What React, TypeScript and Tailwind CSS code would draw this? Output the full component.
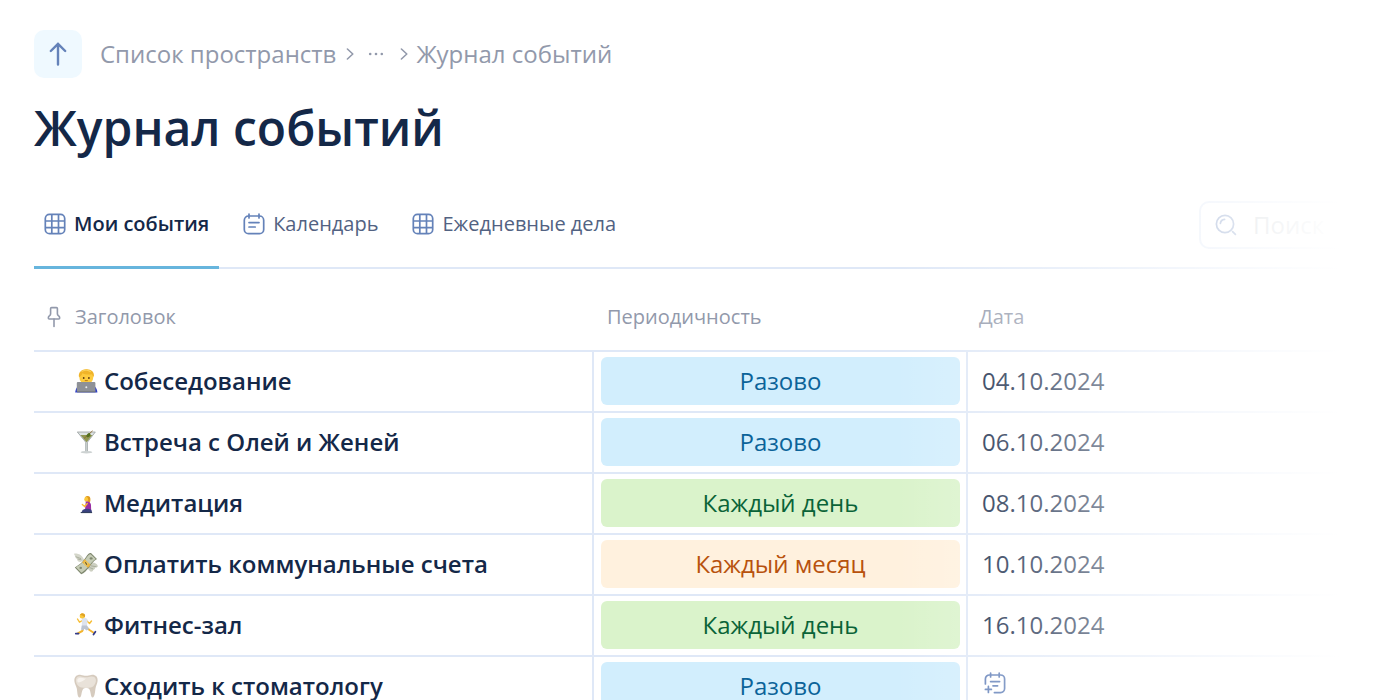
import { useState } from "react";
import type { ReactNode } from "react";

type Period = "once" | "daily" | "monthly";
type EventRow = { emoji: ReactNode; title: string; period: Period; date: string | null };

const PERIODS: Record<Period, { label: string; className: string }> = {
  once: { label: "Разово", className: "bg-[#d2eefd] text-[#0b6399]" },
  daily: { label: "Каждый день", className: "bg-[#daf3cb] text-[#0a6338]" },
  monthly: { label: "Каждый месяц", className: "bg-[#fff1de] text-[#b8520d]" },
};

function GridIcon() {
  return (
    <svg viewBox="0 0 22 22" className="size-[22px] shrink-0" fill="none" stroke="#6482b9" strokeWidth="1.7" aria-hidden="true">
      <rect x="1.3" y="1.3" width="19.4" height="19.4" rx="4.2" />
      <path d="M7.8 1.3v19.4M14.5 1.3v19.4M1.3 8h19.4M1.3 14.6h19.4" />
    </svg>
  );
}

function CalendarIcon() {
  return (
    <svg viewBox="0 0 22 22" className="size-[22px] shrink-0" fill="none" stroke="#6482b9" strokeWidth="1.7" strokeLinecap="round" aria-hidden="true">
      <rect x="1.3" y="3" width="19.4" height="17.7" rx="4.2" />
      <path d="M6 1v4M16 1v4M6 9.6h10M6 14h6.2" />
    </svg>
  );
}

function CalendarAddIcon() {
  return (
    <svg viewBox="0 0 22 22" className="size-[22px]" fill="none" stroke="#5d7cb6" strokeWidth="1.7" strokeLinecap="round" aria-hidden="true">
      <path d="M1.4 12V7a4 4 0 0 1 4-4h11.2a4 4 0 0 1 4 4v9.6a4 4 0 0 1-4 4H10.4" />
      <path d="M6.6 1v4M15.2 1v4M6.6 9.6h9M9 13.8h4.6M4.4 14.4v6M1.4 17.4h6" />
    </svg>
  );
}

function PinIcon() {
  return (
    <svg viewBox="0 0 22 22" className="size-[22px]" fill="none" stroke="#9299ab" strokeWidth="1.6" strokeLinecap="round" strokeLinejoin="round" aria-hidden="true">
      <path d="M8.6 1.6h4.8c.6 0 1 .5 1 1v5.1c0 .9.3 1.4 1 2 .9.7 1.3 1.4 1.3 2.3 0 .7-.4 1-1 1H6.3c-.6 0-1-.3-1-1 0-.9.4-1.6 1.3-2.3.7-.6 1-1.1 1-2V2.6c0-.5.4-1 1-1z" />
      <path d="M11 13v7.4" />
    </svg>
  );
}

function SearchIcon() {
  return (
    <svg viewBox="0 0 22 22" className="size-[22px] shrink-0" fill="none" stroke="#6482b9" strokeWidth="1.7" strokeLinecap="round" aria-hidden="true">
      <circle cx="10" cy="10" r="8.6" />
      <path d="M5.4 9.4a4.6 4.6 0 0 1 4.2-4M17.6 17.6l2.8 2.8" />
    </svg>
  );
}

function Chevron() {
  return (
    <svg viewBox="0 0 8 14" className="h-3.5 w-2 shrink-0" fill="none" stroke="#9299ab" strokeWidth="1.6" strokeLinecap="round" strokeLinejoin="round" aria-hidden="true">
      <path d="M1.4 2 6.8 7 1.4 12" />
    </svg>
  );
}

function Emoji({ children }: { children: ReactNode }) {
  return (
    <svg viewBox="0 0 24 24" className="size-6 shrink-0" aria-hidden="true">
      {children}
    </svg>
  );
}

const technologist = (
  <Emoji>
    <path d="M1.2 23.6c.3-3.6 2-6.9 5-7.6h12c3 .7 5 4 5.200 7.600z" fill="#3040c8" />
    <ellipse cx="12.3" cy="8" rx="7" ry="7.6" fill="#fdcb3e" />
    <path d="M5 8.200C4 3.300 7.500.2 12.500.2c5 0 8.300 3 7.300 7.800-.9-.8-1.400-1.800-1.900-2.800-4 .7-7.400.2-9.500-1-.6 1.800-1.700 3.200-3.400 4z" fill="#f0b429" />
    <path d="M7.5 2.600c3-1.700 7-1.600 9.300.2" fill="none" stroke="#fbd05a" strokeWidth="1.1" />
    <circle cx="9.700" cy="9" r=".9" fill="#5b3a12" />
    <circle cx="14.900" cy="9" r=".9" fill="#5b3a12" />
    <path d="M10.800 11.600h3" stroke="#a7640d" strokeWidth=".8" />
    <rect x="2.800" y="13" width="18.600" height="10" rx="1" fill="#8e9197" />
    <path d="M3 22.200h18.600v1.200H3z" fill="#75787e" />
    <circle cx="12.300" cy="18.200" r="1" fill="#e9ebee" />
  </Emoji>
);

const cocktail = (
  <Emoji>
    <path d="M3.2 2h18.200l-7.800 10.200v9.300h-2.300v-9.300z" fill="#dfe4e4" />
    <path d="M6.300 5h12.200l-5.900 7.200z" fill="#8f9650" />
    <path d="M3.2 2h18.200M3.500 2.200l8.300 10v9.500M21.200 2.200l-7.800 10v9.500" fill="none" stroke="#8c9494" strokeWidth=".7" />
    <path d="m10 8.500 8.600-7.700" stroke="#8f6a30" strokeWidth=".9" />
    <ellipse cx="14.500" cy="5.200" rx="2.300" ry="1.700" fill="#56701f" transform="rotate(-40 14.500 5.200)" />
    <ellipse cx="12.500" cy="22.200" rx="5.800" ry="1.300" fill="#cdd2d2" />
  </Emoji>
);

const kneeling = (
  <Emoji>
    <path d="M11 9c-.5-2.500.5-4 2.500-4 2.200 0 3.200 1.500 2.900 4.300-.2 1.500-.6 3-1.400 3.900l-2-3z" fill="#e09a1d" />
    <ellipse cx="12.200" cy="8.300" rx="1.900" ry="2.500" fill="#fbc83b" />
    <path d="M11.800 10.500c3.100-.5 4.900 1 5.200 3.500l.2 6h-6.300z" fill="#9a2fa4" />
    <path d="m13.300 12.500-2.600 3-2.400-2" fill="none" stroke="#f7bd34" strokeWidth="1.3" strokeLinecap="round" />
    <path d="M8.500 19c3-1.500 6-1.500 8.700-.2.900 1.200.8 2.300.2 3.200H7.500z" fill="#39417f" />
    <path d="M6.700 20.900h11.400v1.200H6.700z" fill="#33405f" />
  </Emoji>
);

const money = (
  <Emoji>
    <path d="M10.500 8.500C8 2.800 4 1.100 0 1.700c.3 1.200.7 1.900 1.700 2.700-.5 1 .2 2 1.400 2.500-.2 1.400 1 2.800 3.300 3.100z" fill="#d4d6ca" />
    <path d="M15.500 11.500c3.500-2 7-.5 8.500 2.700-.8 1-1.700 1.400-2.900 1.200.2 1.300-.6 2.200-2 2.300.2 1.300-1 2.100-2.700 1.900L13 16z" fill="#cdd0c2" />
    <path d="m1.400 4.600 5.600 2M3.600 6.900l3.900 1M22.500 14.800l-5.600-1M19.300 17l-3.800-1.500" stroke="#a0a493" strokeWidth=".8" />
    <path d="M.8 15.500C5 12.500 8.200 11 12 5c2-3.200 3.500-4.500 5-3.900l6 5.900c-4 2-5.200 5-8.200 8.700-2.300 2.900-4.700 5.600-7.600 6.500z" fill="#7f886f" />
    <path d="M1.900 15.200c3.800-2.500 7.100-4.500 10.900-10 1.700-2.400 2.600-3.200 3.800-3l5.100 4.800c-3.500 2-5 5-8 8.300-2.200 2.500-4.200 4.500-6.300 5.400z" fill="#c6ccb6" />
    <path d="m8.200 10.500 5.800 5.300 2.600-3.100-5.900-5.400z" fill="#edb53b" />
    <circle cx="12.100" cy="11.600" r="2.200" fill="#e9c865" />
    <path d="m11.300 10.300 1.600 2.500" stroke="#6e5724" strokeWidth="1.200" />
    <ellipse cx="17.100" cy="6.400" rx="1.500" ry="1.200" fill="#7f886f" />
    <ellipse cx="6.700" cy="15.900" rx="1.300" ry="1.100" fill="#7f886f" />
  </Emoji>
);

const runner = (
  <Emoji>
    <g fill="none" strokeLinecap="round" strokeLinejoin="round">
      <path d="m11.500 13.500 4 3.500 4.500 3" stroke="#f4b52d" strokeWidth="2" />
      <path d="m9.800 14-1.500 4-4.500 2.300" stroke="#f4b52d" strokeWidth="2" />
      <path d="m12.500 7.500 3 3L17.500 8" stroke="#f7bd34" strokeWidth="1.400" />
      <path d="m8.500 7.500-3 1.700L3.500 6" stroke="#f7bd34" strokeWidth="1.400" />
      <path d="M1.800 20.600h2.700M19.500 21.500l1.900-2.700" stroke="#343c8a" strokeWidth="1.800" />
    </g>
    <path d="M7.800 5.200c2.200-.8 4.800-.3 5.800 1.500l-.7 7.300H7.800z" fill="#dde3ee" />
    <path d="M7.800 12.500H13l2.100 3.500-2.500 1.500-2.300-1.800-1 1.700-2.300-.9z" fill="#bcc4d2" />
    <circle cx="8.200" cy="3" r="2.500" fill="#fbc83b" />
    <path d="M5.900 1.800C6.700 0 9.300-.4 10.500 1c.9 1 .8 2.700-.2 3.600C9.700 3.200 8.200 2.200 5.900 1.800z" fill="#e0a323" />
  </Emoji>
);

const tooth = (
  <Emoji>
    <path d="M.4 7.200C0 2.500 3.300.5 6.900.9c2 .3 3.300.9 5.200.9s3.300-.7 5.200-.9C21.200.4 24 2.700 23.600 7c-.3 2.900-1.700 4.700-2.100 7.500-.5 3.300-.8 9-2.900 9-2.300 0-1.500-6.700-3.600-8.700-1-1-4.700-1-5.800.1-2 2-1.300 8.600-3.700 8.600-2.200 0-2.100-5.800-2.700-9C2.300 11.800.7 10 .4 7.200z" fill="#d6cbbe" />
    <path d="M1.900 6.700C1.800 3.600 4 2.100 6.700 2.400c2 .2 3.400.9 5.400.9s3.400-.7 5.200-.8c2.800-.2 4.900 1.400 4.600 4.200-.4 3.600-2.600 6.300-5.200 6.800-3 .6-6.200.6-9.200 0C4.700 12.900 2.200 10.300 1.900 6.700z" fill="#e9e2d9" />
    <path d="M3.300 6.300C3.400 4.300 5 3.500 7 3.700c1.800.2 3.300.9 5 .9-2.500 2.700-6.500 4.300-8.200 3.700-.3-.6-.5-1.300-.5-2z" fill="#f7f3ee" />
  </Emoji>
);

const EVENTS: EventRow[] = [
  { emoji: technologist, title: "Собеседование", period: "once", date: "04.10.2024" },
  { emoji: cocktail, title: "Встреча с Олей и Женей", period: "once", date: "06.10.2024" },
  { emoji: kneeling, title: "Медитация", period: "daily", date: "08.10.2024" },
  { emoji: money, title: "Оплатить коммунальные счета", period: "monthly", date: "10.10.2024" },
  { emoji: runner, title: "Фитнес-зал", period: "daily", date: "16.10.2024" },
  { emoji: tooth, title: "Сходить к стоматологу", period: "once", date: null },
];

const TABS = [
  { id: "mine", label: "Мои события", icon: <GridIcon /> },
  { id: "calendar", label: "Календарь", icon: <CalendarIcon /> },
  { id: "daily", label: "Ежедневные дела", icon: <GridIcon /> },
];

export default function App() {
  const [tab, setTab] = useState("mine");

  return (
    <div className="relative h-screen overflow-hidden bg-white pl-[34px] font-['Open_Sans','Noto_Sans',sans-serif] text-[#142848]">
      <nav className="flex items-center pt-[30px] text-2xl text-[#9299ab]">
        <button type="button" aria-label="Наверх" className="flex size-12 items-center justify-center rounded-[10px] bg-[#eff9ff]">
          <svg viewBox="0 0 24 24" className="size-6" fill="none" stroke="#6482b9" strokeWidth="2.4" strokeLinecap="round" strokeLinejoin="round" aria-hidden="true">
            <path d="M12 22.5V1.8M4.8 9 12 1.8 19.2 9" />
          </svg>
        </button>
        <a href="#spaces" className="ml-[18px]">Список пространств</a>
        <span className="ml-2.5"><Chevron /></span>
        <button type="button" aria-label="Показать путь" className="ml-3.5">
          <svg viewBox="0 0 16 4" className="h-1 w-4" fill="#9299ab" aria-hidden="true">
            <circle cx="2.2" cy="2" r="1.3" />
            <circle cx="8" cy="2" r="1.3" />
            <circle cx="13.8" cy="2" r="1.3" />
          </svg>
        </button>
        <span className="ml-4"><Chevron /></span>
        <a href="#journal" className="ml-2">Журнал событий</a>
      </nav>

      <h1 className="mt-[18px] text-5xl leading-[64px] font-semibold">Журнал событий</h1>

      <div className="mt-[22px] flex items-start justify-between border-b-2 border-[#dfe8f7] pr-[34px]">
        <div role="tablist" className="-mb-0.5 flex gap-3.5">
          {TABS.map((t) => (
            <button
              key={t.id}
              type="button"
              role="tab"
              aria-selected={tab === t.id}
              onClick={() => setTab(t.id)}
              className={
                "flex h-[87px] items-center gap-2 border-b-[3px] px-2.5 text-xl " +
                (tab === t.id ? "border-[#67b5dd] font-semibold" : "border-transparent text-[#526282]")
              }
            >
              {t.icon}
              {t.label}
            </button>
          ))}
        </div>
        <label className="mt-[19px] flex h-12 w-[167px] items-center gap-4 rounded-[10px] border-2 border-[#dfe8f7] px-3.5">
          <SearchIcon />
          <input type="search" aria-label="Поиск" placeholder="Поиск" className="w-full min-w-0 text-2xl outline-none placeholder:text-[#b3bcc4]" />
        </label>
      </div>

      <table className="w-full table-fixed border-collapse text-2xl">
        <thead>
          <tr className="h-[82px] border-b-2 border-[#dfe8f7] text-left text-xl text-[#9299ab]">
            <th className="w-[559px] pt-3.5 pl-[9px] font-normal">
              <span className="flex items-center gap-2.5">
                <PinIcon />
                Заголовок
              </span>
            </th>
            <th className="w-[374px] pt-3.5 pl-3.5 font-normal">Периодичность</th>
            <th className="pt-3.5 pl-3 font-normal">Дата</th>
          </tr>
        </thead>
        <tbody>
          {EVENTS.map((e) => (
            <tr key={e.title} className="h-[61px] border-b-2 border-[#dfe8f7]">
              <td className="border-r-2 border-[#dfe8f7] pb-0.5 pl-10 font-semibold">
                <span className="flex items-center gap-1.5">
                  {e.emoji}
                  {e.title}
                </span>
              </td>
              <td className="border-r-2 border-[#dfe8f7] pr-1.5 pb-0.5 pl-[7px]">
                <span className={"flex h-12 items-center justify-center rounded-md " + PERIODS[e.period].className}>
                  {PERIODS[e.period].label}
                </span>
              </td>
              <td className="pb-0.5 pl-3.5">
                {e.date ?? (
                  <button type="button" aria-label="Добавить дату" className="block pb-1.5 pl-0.5">
                    <CalendarAddIcon />
                  </button>
                )}
              </td>
            </tr>
          ))}
        </tbody>
      </table>

      {/* the right side of the table fades out into the page */}
      <div className="pointer-events-none absolute inset-y-0 right-0 left-[64%] bg-linear-to-r from-white/0 to-white to-88%" />
    </div>
  );
}
